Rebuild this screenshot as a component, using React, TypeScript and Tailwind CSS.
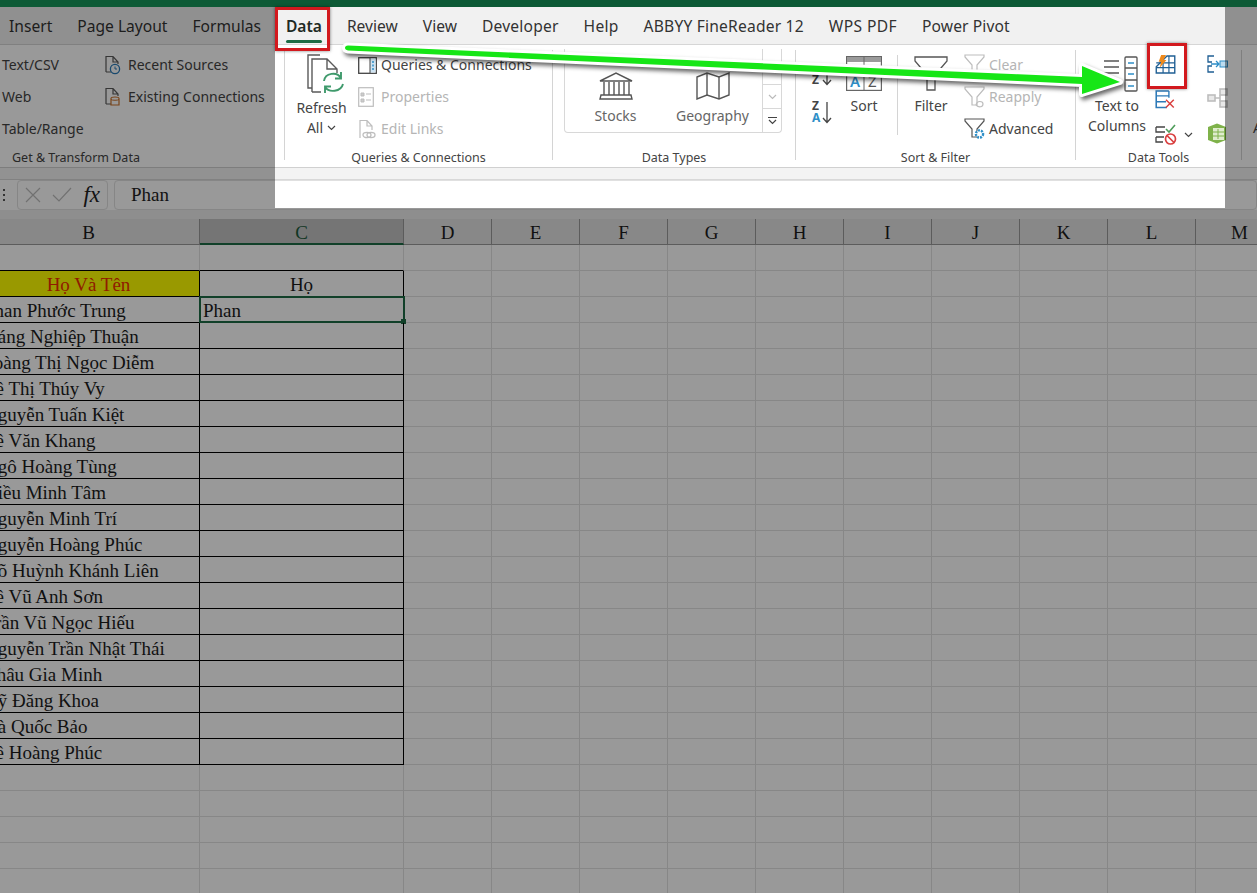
import React from "react";

const tabs: [string, string][] = [
  ["Insert", ""], ["Page Layout", ""], ["Formulas", ""], ["Data", "font-semibold text-[#1f2a24]"], ["Review", ""], ["View", ""],
  ["Developer", "tracking-[0.2px]"], ["Help", "tracking-[0.25px]"], ["ABBYY FineReader 12", "tracking-[0.2px]"], ["WPS PDF", "tracking-[0.4px]"], ["Power Pivot", "tracking-[0.1px]"],
];
const letters = ["D", "E", "F", "G", "H", "I", "J", "K", "L", "M"];
const names = [
  "Phan Phước Trung", "Đáng Nghiệp Thuận", "Hoàng Thị Ngọc Diễm", "Lê Thị Thúy Vy", "Nguyễn Tuấn Kiệt", "Lê Văn Khang",
  "Ngô Hoàng Tùng", "Kiều Minh Tâm", "Nguyễn Minh Trí", "Nguyễn Hoàng Phúc", "Võ Huỳnh Khánh Liên", "Lê Vũ Anh Sơn",
  "Trần Vũ Ngọc Hiếu", "Nguyễn Trần Nhật Thái", "Châu Gia Minh", "Vỹ Đăng Khoa", "Hà Quốc Bảo", "Lê Hoàng Phúc",
];

const S = "#5a5a5a";
const G = "#bdbdbd";
const B = "#2f8fc8";

function Doc({ c = S }: { c?: string }) {
  return <path d="M3 17V1.5H10L15 7V9M10 1.5V7H15M3 17H8" fill="none" stroke={c} strokeWidth="1.2" />;
}
const DocClock = () => (
  <svg width="18" height="20" viewBox="0 0 18 20"><Doc /><circle cx="12" cy="14" r="4.6" fill="#fff" stroke="#2a7ab8" strokeWidth="1.3" /><path d="M12 11.5V14H14" fill="none" stroke="#2a7ab8" /></svg>
);
const DocDb = () => (
  <svg width="18" height="20" viewBox="0 0 18 20"><Doc /><path d="M8 11.5C8 9.5 16 9.5 16 11.5V18H8Z" fill="#fff" stroke="#c9722c" strokeWidth="1.2" /><path d="M8 12.5C9 13.5 15 13.5 16 12.5" fill="none" stroke="#c9722c" /></svg>
);
const QueriesIcon = () => (
  <svg width="19" height="17" viewBox="0 0 19 17"><rect x="0.7" y="0.7" width="17.6" height="15.6" fill="#fff" stroke="#444" strokeWidth="1.3" /><rect x="12" y="1.5" width="5.5" height="14" fill="#cfe4f3" /><path d="M15 4V13" stroke={B} strokeWidth="1.5" strokeDasharray="2 1.5" /><path d="M12 1V16" stroke="#444" /></svg>
);
const PropIcon = () => (
  <svg width="16" height="20" viewBox="0 0 16 20"><rect x="0.7" y="0.7" width="14.6" height="18.6" fill="none" stroke={G} strokeWidth="1.2" /><path d="M3 6h3v3H3zM3 12h3v3H3zM8 7h5M8 13h5" fill="#ccc" stroke={G} /></svg>
);
const LinkIcon = () => (
  <svg width="18" height="21" viewBox="0 0 18 21"><path d="M2 19V1.5H9L14 7V11M9 1.5V7H14" fill="none" stroke={G} strokeWidth="1.2" /><ellipse cx="9" cy="16" rx="4" ry="2.6" fill="#fff" stroke={G} strokeWidth="1.3" /><ellipse cx="13" cy="16" rx="4" ry="2.6" fill="none" stroke={G} strokeWidth="1.3" /></svg>
);
const RefreshIcon = () => (
  <svg width="38" height="42" viewBox="0 0 38 42">
    <path d="M13 1H1V34H5" fill="none" stroke={S} strokeWidth="1.4" />
    <path d="M5 38V5H20L30 15V19M20 5V15H30M5 38H14" fill="none" stroke={S} strokeWidth="1.4" />
    <path d="M17 27C18 19 30 17 34 24M34 18V24.5H28" fill="none" stroke="#3f9a6c" strokeWidth="1.9" />
    <path d="M36 30C34 38 22 39 18 33M18 39V32.5H24" fill="none" stroke="#3f9a6c" strokeWidth="1.9" />
  </svg>
);
const BankIcon = () => (
  <svg width="36" height="28" viewBox="0 0 36 28" fill="none" stroke="#555" strokeWidth="1.4">
    <path d="M2 9L18 1L34 9Z" /><path d="M6 10V23M11 10V23M16 10V23M21 10V23M26 10V23M31 10V23" /><path d="M3 23H33L34 27H2Z" />
  </svg>
);
const MapIcon = () => (
  <svg width="36" height="28" viewBox="0 0 36 28" fill="none" stroke="#555" strokeWidth="1.4">
    <path d="M2 5L12 1L24 5L34 1V23L24 27L12 23L2 27Z" /><path d="M12 1V23M24 5V27" />
  </svg>
);
const AZ = ({ top, bottom, color }: { top: string; bottom: string; color: "top" | "bottom" }) => (
  <svg width="22" height="24" viewBox="0 0 22 24">
    <text x="1" y="10" fontSize="12" fontWeight="700" fontFamily="Noto Sans, sans-serif" fill={color === "top" ? B : "#444"}>{top}</text>
    <text x="1" y="22" fontSize="12" fontWeight="700" fontFamily="Noto Sans, sans-serif" fill={color === "bottom" ? B : "#444"}>{bottom}</text>
    <path d="M16 2V22M12 18L16 22.5L20 18" fill="none" stroke="#444" strokeWidth="1.3" />
  </svg>
);
const SortIcon = () => (
  <svg width="36" height="35" viewBox="0 0 36 35">
    <rect x="0.6" y="0.6" width="34.8" height="33.8" fill="#fff" stroke="#666" strokeWidth="1.2" />
    <rect x="1" y="1" width="34" height="5" fill="#9a9a9a" />
    <path d="M18 1V34" stroke="#666" />
    <text x="4" y="31" fontSize="15" fontWeight="600" fontFamily="Noto Sans, sans-serif" fill={B}>A</text>
    <text x="22" y="31" fontSize="15" fontFamily="Noto Sans, sans-serif" fill="#555">Z</text>
  </svg>
);
const BigFunnel = () => (
  <svg width="36" height="36" viewBox="0 0 36 36" fill="none" stroke="#555" strokeWidth="1.3">
    <path d="M2 1H34V5L22 19V34H14V19L2 5Z" fill="#fff" />
  </svg>
);
const Funnel = ({ c, extra }: { c: string; extra?: React.ReactNode }) => (
  <svg width="22" height="22" viewBox="0 0 22 22" fill="none" stroke={c} strokeWidth="1.2">
    <path d="M1 1H20V3L13 11V19H8V11L1 3Z" fill="#fff" />
    {extra}
  </svg>
);
const TextCols = () => (
  <svg width="36" height="36" viewBox="0 0 36 36" fill="none">
    <path d="M1 5H16M1 11H16M1 17H16" stroke="#555" strokeWidth="1.3" />
    <rect x="22" y="1" width="12" height="34" rx="1" fill="#fff" stroke="#555" strokeWidth="1.3" />
    <path d="M22 12H34M22 24H34" stroke="#555" strokeWidth="1.3" />
    <path d="M25 7H31M25 18H31M25 30H31" stroke={B} strokeWidth="1.5" />
  </svg>
);
const Flash = () => (
  <svg width="22" height="20" viewBox="0 0 22 20" fill="none">
    <path d="M1 18.5H20V1H12L1 12Z" fill="#fff" stroke="#1f5f94" strokeWidth="1.4" />
    <path d="M1 13H20M1 8H20M8 8V18.5M14 1V18.5" stroke="#1f5f94" strokeWidth="1.2" />
    <path d="M6 0H11L8.5 5H11.5L4.5 13L6 7H3.5Z" fill="#ef8a1c" />
  </svg>
);
const Dup = () => (
  <svg width="20" height="20" viewBox="0 0 20 20" fill="none">
    <path d="M14 1H1V18H12" stroke="#2e7ab8" strokeWidth="1.6" />
    <path d="M14 1V8M1 6H14M1 12H11" stroke="#2e7ab8" strokeWidth="1.4" />
    <path d="M11 10L19 18M19 10L11 18" stroke="#d94040" strokeWidth="1.5" />
  </svg>
);
const Valid = () => (
  <svg width="22" height="21" viewBox="0 0 22 21" fill="none">
    <path d="M1 3H10M1 3V8H10M1 13H9M1 13V18H8" stroke="#444" strokeWidth="1.3" />
    <path d="M11 5L14 8L20 1" stroke="#4f9d5b" strokeWidth="1.6" />
    <circle cx="15.5" cy="15" r="5" fill="#fff" stroke="#d94040" strokeWidth="1.7" />
    <path d="M12 11.5L19 18.5" stroke="#d94040" strokeWidth="1.7" />
  </svg>
);
const Consolidate = () => (
  <svg width="21" height="18" viewBox="0 0 21 18" fill="none">
    <path d="M7 1H1V7H5M7 17H1V11H5" stroke="#1f5f94" strokeWidth="1.3" />
    <path d="M4 9H12M9 6L12 9L9 12" stroke={B} strokeWidth="1.3" />
    <rect x="13" y="6" width="7.5" height="6" fill="#bcdcf0" stroke={B} />
  </svg>
);
const Rel = () => (
  <svg width="21" height="20" viewBox="0 0 21 20" fill="none" stroke="#bdbdbd" strokeWidth="1.6">
    <rect x="1" y="7" width="7" height="6" fill="#e8e8e8" /><rect x="13" y="1" width="7" height="6" fill="#e8e8e8" /><rect x="13" y="13" width="7" height="6" fill="#e8e8e8" /><path d="M8 10H13V7M13 10V13" />
  </svg>
);
const Model = () => (
  <svg width="20" height="21" viewBox="0 0 20 21">
    <path d="M1 4L10 0.5L19 4V17L10 20.5L1 17Z" fill="#7fb24a" />
    <rect x="6" y="5" width="11" height="12" fill="#dfeccd" />
    <path d="M11 6V16M6 9H17M6 13H17" stroke="#7fb24a" />
  </svg>
);
const Chev = ({ c = "#444" }: { c?: string }) => (
  <svg width="9" height="6" viewBox="0 0 9 6" fill="none"><path d="M1 1L4.5 4.5L8 1" stroke={c} strokeWidth="1.2" /></svg>
);

function Item({ icon, label, muted, wide }: { icon: React.ReactNode; label: string; muted?: boolean; wide?: boolean }) {
  return (
    <div className={`flex h-8 items-center whitespace-nowrap ${muted ? "text-[#b5b5b5]" : "text-[#444]"}`}>
      <span className={`flex shrink-0 items-center ${wide ? "w-[25px]" : "w-[23px]"}`}>{icon}</span>
      <span>{label}</span>
    </div>
  );
}

const Sep = () => <div className="mt-[1px] h-[110px] w-px shrink-0 self-start bg-[#d4d4d4]" />;

function Group({ w, title, left, children }: { w: string; title: string; left?: boolean; children: React.ReactNode }) {
  return (
    <div className={`flex h-full shrink-0 flex-col ${w}`}>
      <div className="flex h-[96px]">{children}</div>
      <div className={`h-[22px] whitespace-nowrap text-[12.5px] leading-[26px] text-[#444] ${left ? "pl-3" : "text-center"}`}>{title}</div>
    </div>
  );
}

export default function App() {
  return (
    <div className="relative h-[893px] w-[1257px] overflow-hidden bg-white font-['Noto_Sans',sans-serif]">
      <div className="relative z-20 h-[7px] bg-[#0d5a36]" />
      {/* tabs */}
      <div className="flex h-[38px] items-center gap-[25px] border-b border-[#d6d6d6] bg-[#f1f1f1] pl-[9px] pt-[2px] text-[15.6px] text-[#333]">
        {tabs.map(([t, extra]) => (
          <div key={t} className={`relative whitespace-nowrap ${extra}`}>
            {t}
            {t === "Data" && <div className="absolute -bottom-[5px] left-0 right-0 h-[3px] rounded bg-[#1d6b45]" />}
          </div>
        ))}
      </div>
      {/* ribbon */}
      <div className="flex h-[123px] border-b border-[#d0d0d0] bg-white pt-[4px] text-[14px] leading-5 text-[#444]">
        <Group w="w-[284px]" title="Get & Transform Data" left>
          <div className="w-[103px] pl-[2px]">
            <div className="flex h-8 items-center">Text/CSV</div>
            <div className="flex h-8 items-center">Web</div>
            <div className="flex h-8 items-center">Table/Range</div>
          </div>
          <div>
            <Item icon={<DocClock />} label="Recent Sources" wide />
            <Item icon={<DocDb />} label="Existing Connections" wide />
          </div>
        </Group>
        <Sep />
        <Group w="w-[267px]" title="Queries & Connections">
          <div className="ml-3 flex w-[49px] flex-col items-center">
            <div className="h-[49px] pl-[8px] pt-[5px]"><RefreshIcon /></div>
            <div>Refresh</div>
            <div className="flex items-center gap-1">All <Chev /></div>
          </div>
          <div className="ml-3">
            <Item icon={<QueriesIcon />} label="Queries & Connections" />
            <Item icon={<PropIcon />} label="Properties" muted />
            <Item icon={<LinkIcon />} label="Edit Links" muted />
          </div>
        </Group>
        <Sep />
        <Group w="w-[242px]" title="Data Types">
          <div className="ml-[11px] flex h-[84px] w-[218px] rounded-b border border-t-0 border-[#d8d8d8] text-[#666]">
            <div className="flex flex-1 pl-[2px] pt-[23px]">
              <div className="flex w-[97px] flex-col items-center gap-[6px]"><BankIcon /><span>Stocks</span></div>
              <div className="flex w-[97px] flex-col items-center gap-[6px]"><MapIcon /><span>Geography</span></div>
            </div>
            <div className="flex w-[19px] flex-col border-l border-[#d8d8d8]">
              <div className="h-[36px] border-b border-[#d8d8d8]" />
              <div className="flex h-[24px] items-center justify-center border-b border-[#d8d8d8]"><Chev c="#bbb" /></div>
              <div className="flex flex-1 flex-col items-center justify-center"><div className="mb-[1px] h-px w-[9px] bg-[#444]" /><Chev /></div>
            </div>
          </div>
        </Group>
        <Sep />
        <Group w="w-[279px]" title="Sort & Filter">
          <div className="ml-[15px] flex w-[22px] flex-col gap-[14px] pt-[13px]">
            <AZ top="A" bottom="Z" color="top" />
            <AZ top="Z" bottom="A" color="bottom" />
          </div>
          <div className="ml-[13px] flex w-[36px] flex-col items-center"><div className="h-[47px] pt-[7px]"><SortIcon /></div><div>Sort</div></div>
          <div className="ml-[15px] mt-[6px] h-[80px] w-px bg-[#d4d4d4]" />
          <div className="ml-[15px] flex w-[36px] flex-col items-center"><div className="h-[47px] pt-[7px]"><BigFunnel /></div><div>Filter</div></div>
          <div className="ml-[15px]">
            <Item wide icon={<Funnel c={G} extra={<path d="M12 19C14 21 18 20 18 17" />} />} label="Clear" muted />
            <Item wide icon={<Funnel c={G} extra={<path d="M12 19C13 14 19 15 19 18M12 19C15 22 19 21 19 18" />} />} label="Reapply" muted />
            <Item wide icon={<Funnel c="#555" extra={<circle cx="15.5" cy="16" r="3.6" fill="#fff" stroke="#2f8fc8" strokeWidth="2.4" strokeDasharray="2 1" />} />} label="Advanced" />
          </div>
        </Group>
        <Sep />
        <Group w="w-[165px]" title="Data Tools">
          <div className="ml-[10px] flex w-[62px] flex-col items-center">
            <div className="h-[47px] pl-[8px] pt-[7px]"><TextCols /></div>
            <div>Text to</div>
            <div>Columns</div>
          </div>
          <div className="ml-[7px] flex w-[44px] flex-col gap-[15px] pt-[6px]">
            <Flash />
            <Dup />
            <div className="flex items-center gap-[7px]"><Valid /><Chev /></div>
          </div>
          <div className="ml-[8px] flex flex-col gap-[15px] pt-[6px]">
            <Consolidate />
            <Rel />
            <Model />
          </div>
        </Group>
        <Sep />
        <div className="pl-[11px] pt-[69px]">Analysis</div>
      </div>
      {/* gap */}
      <div className="h-[12px] border-b border-[#d8d8d8] bg-[#f3f3f3]" />
      {/* formula bar */}
      <div className="flex h-[30px] items-center bg-white font-['Liberation_Serif',serif]">
        <div className="flex w-[17px] flex-col items-center gap-[3px] pr-[9px]">
          <span className="h-[2px] w-[2px] bg-[#555]" />
          <span className="h-[2px] w-[2px] bg-[#555]" />
          <span className="h-[2px] w-[2px] bg-[#555]" />
        </div>
        <div className="flex h-[30px] w-[91px] items-center justify-between rounded border border-[#e0e0e0] px-[7px]">
          <svg width="16" height="16" viewBox="0 0 16 16" fill="none"><path d="M1 1L15 15M15 1L1 15" stroke="#bdbdbd" strokeWidth="1.2" /></svg>
          <svg width="20" height="16" viewBox="0 0 20 16" fill="none"><path d="M1 8L7 14L19 1" stroke="#bdbdbd" strokeWidth="1.2" /></svg>
          <span className="text-[23px] italic text-[#222]">fx</span>
        </div>
        <div className="ml-[6px] flex h-[30px] flex-1 items-center rounded border border-[#e0e0e0] pl-[16px] text-[19px] text-[#222]">Phan</div>
      </div>
      <div className="h-[9px] bg-[#ededed]" />
      {/* sheet */}
      <div className="ml-[-22px] grid w-max grid-cols-[222px_204px_repeat(10,88px)] auto-rows-[26px] font-['Liberation_Serif',serif] text-[19px] leading-[28px] text-[#1c1c1c]">
        <div className="border-b border-r border-[#999] bg-[#e3e3e3] text-center">B</div>
        <div className="border-b-2 border-r border-[#1d6b45] border-r-[#999] bg-[#c4c4c4] text-center text-[#1d5c3c]">C</div>
        {letters.map((l) => (
          <div key={l} className="border-b border-r border-[#999] bg-[#e3e3e3] text-center">{l}</div>
        ))}
        {Array.from({ length: 25 }).map((_, row) => {
          const inTable = row >= 1 && row <= 19;
          const edge = row >= 0 && row <= 19;
          return (
            <React.Fragment key={row}>
              <div className={`overflow-hidden whitespace-nowrap border-b border-r ${edge ? "border-b-black" : "border-b-[#e2e2e2]"} ${inTable ? "border-r-black" : "border-r-[#e2e2e2]"} ${row === 1 ? "bg-[#ffff00] text-center text-[#f03000]" : row === 4 ? "pl-[2px]" : "pl-[6px]"}`}>
                {row === 1 ? "Họ Và Tên" : row >= 2 && row <= 19 ? names[row - 2] : ""}
              </div>
              <div className={`relative border-b border-r ${edge ? "border-b-black" : "border-b-[#e2e2e2]"} ${inTable ? "border-r-black" : "border-r-[#e2e2e2]"} ${row === 1 ? "text-center" : "pl-[3px]"}`}>
                {row === 1 ? "Họ" : row === 2 ? "Phan" : ""}
                {row === 2 && (
                  <div className="absolute -left-px -top-px h-[27px] w-[206px] border-2 border-[#1d6b45]">
                    <div className="absolute -bottom-[3px] -right-[3px] h-[5px] w-[5px] bg-[#1d6b45]" />
                  </div>
                )}
              </div>
              {letters.map((l) => (
                <div key={l} className="border-b border-r border-[#e2e2e2]" />
              ))}
            </React.Fragment>
          );
        })}
      </div>

      {/* dim overlay with spotlight */}
      <div className="pointer-events-none absolute left-[275px] top-[7px] z-10 h-[201px] w-[950px] shadow-[0_0_6px_2000px_rgba(0,0,0,0.4)]" />
      {/* red call-out boxes */}
      <div className="absolute left-[275px] top-[7px] z-20 h-[44px] w-[55px] border-[3px] border-[#d2191e] shadow-[0_0_3px_rgba(0,0,0,0.5)]" />
      <div className="absolute left-[1147px] top-[43px] z-20 h-[46px] w-[40px] border-[3px] border-[#d2191e] shadow-[0_0_3px_rgba(0,0,0,0.5)]" />
      {/* arrow */}
      <svg className="pointer-events-none absolute left-0 top-0 z-20 drop-shadow-[2px_3px_2px_rgba(0,0,0,0.6)]" width="1257" height="893" viewBox="0 0 1257 893">
        <path d="M348 45.5L1082 77V66L1120 82L1082 94V84L348 50.5C344 50 344 45.5 348 45.5Z" fill="#16e616" stroke="#fff" strokeWidth="6" strokeLinejoin="round" paintOrder="stroke" />
      </svg>
    </div>
  );
}
